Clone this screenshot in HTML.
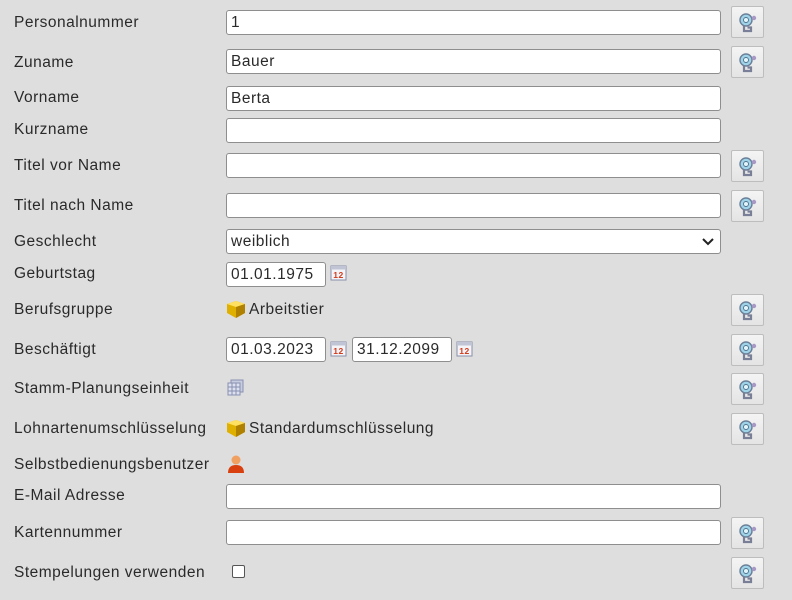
<!DOCTYPE html>
<html><head><meta charset="utf-8"><style>
body{margin:0;width:792px;height:600px;background:#dedede;font-family:"Liberation Sans",sans-serif;font-size:15.5px;color:#2a2a2a;position:relative;overflow:hidden;letter-spacing:0.5px}
.l{position:absolute;left:14px;line-height:20px}
.i{position:absolute;height:23px;border:1px solid #8e8e8e;border-radius:3px;background:#fff;box-sizing:content-box;line-height:23px;padding-left:4px;font-size:15.5px}
.b{position:absolute;left:731px;width:31px;height:30px;border:1px solid #bdbdbd;background:linear-gradient(#f4f4f4,#e4e4e4);border-radius:2px}
.b svg{position:absolute;left:6px;top:5px}
.cal{position:absolute;width:17px;height:17px}
.t{position:absolute;line-height:20px}
</style></head><body>
<svg width="0" height="0" style="position:absolute"><defs>
<g id="k"><circle cx="8" cy="8" r="6" fill="#9fd4e8" stroke="#6a7f98" stroke-width="1.4"/><circle cx="8" cy="8" r="2.5" fill="#e0f4fa" stroke="#50708a" stroke-width="0.9"/><path d="M6 13.5 L6 19 L13 19 L13 15.5 L9.5 15.5" fill="none" stroke="#7a7f98" stroke-width="2.2"/><circle cx="16" cy="6" r="2.2" fill="#a898c4"/></g>
<g id="c"><rect x="1" y="2" width="15" height="14" fill="#f4f4f8" stroke="#8890a8"/><rect x="1" y="2" width="15" height="3.5" fill="#c0c4d4"/><text x="8.5" y="14" font-size="8.5" font-weight="bold" fill="#d23a1a" text-anchor="middle" font-family="Liberation Sans">12</text></g>
<g id="cube"><path d="M1 5 L10 2 L19 5 L19 14 L10 19 L1 14Z" fill="#e0b000"/><path d="M1 5 L10 8 L19 5 L10 2Z" fill="#ffe060"/><path d="M10 8 L19 5 L19 14 L10 19Z" fill="#b08000"/></g>
</defs></svg>

<div class="l" style="top:13px">Personalnummer</div><div class="i" style="left:226px;top:10px;width:489px">1</div><div class="b" style="top:6px"><svg width="20" height="21"><use href="#k"/></svg></div>
<div class="l" style="top:53px">Zuname</div><div class="i" style="left:226px;top:49px;width:489px">Bauer</div><div class="b" style="top:46px"><svg width="20" height="21"><use href="#k"/></svg></div>
<div class="l" style="top:88px">Vorname</div><div class="i" style="left:226px;top:86px;width:489px">Berta</div>
<div class="l" style="top:120px">Kurzname</div><div class="i" style="left:226px;top:118px;width:489px"></div>
<div class="l" style="top:156px">Titel vor Name</div><div class="i" style="left:226px;top:153px;width:489px"></div><div class="b" style="top:150px"><svg width="20" height="21"><use href="#k"/></svg></div>
<div class="l" style="top:196px">Titel nach Name</div><div class="i" style="left:226px;top:193px;width:489px"></div><div class="b" style="top:190px"><svg width="20" height="21"><use href="#k"/></svg></div>
<div class="l" style="top:232px">Geschlecht</div><div class="i" style="left:226px;top:229px;width:489px">weiblich<svg style="position:absolute;right:6px;top:8px" width="12" height="8"><path d="M1 1 L6 6 L11 1" fill="none" stroke="#222" stroke-width="2"/></svg></div>
<div class="l" style="top:264px">Geburtstag</div><div class="i" style="left:226px;top:262px;width:94px">01.01.1975</div><svg class="cal" style="left:330px;top:264px"><use href="#c"/></svg>
<div class="l" style="top:300px">Berufsgruppe</div><svg style="position:absolute;left:226px;top:299px" width="20" height="21"><use href="#cube"/></svg><div class="t" style="left:249px;top:300px">Arbeitstier</div><div class="b" style="top:294px"><svg width="20" height="21"><use href="#k"/></svg></div>
<div class="l" style="top:340px">Beschäftigt</div><div class="i" style="left:226px;top:337px;width:94px">01.03.2023</div><svg class="cal" style="left:330px;top:340px"><use href="#c"/></svg><div class="i" style="left:352px;top:337px;width:94px">31.12.2099</div><svg class="cal" style="left:456px;top:340px"><use href="#c"/></svg><div class="b" style="top:334px"><svg width="20" height="21"><use href="#k"/></svg></div>
<div class="l" style="top:379px">Stamm-Planungseinheit</div><svg style="position:absolute;left:227px;top:379px" width="18" height="18"><rect x="4" y="1" width="12" height="12" fill="#c8cce0" stroke="#8890b0"/><rect x="1" y="4" width="12" height="12" fill="#dde0ee" stroke="#8890b0"/><path d="M5 4V16M9 4V16M1 8H13M1 12H13" stroke="#8890b0"/></svg><div class="b" style="top:373px"><svg width="20" height="21"><use href="#k"/></svg></div>
<div class="l" style="top:419px">Lohnartenumschlüsselung</div><svg style="position:absolute;left:226px;top:418px" width="20" height="21"><use href="#cube"/></svg><div class="t" style="left:249px;top:419px">Standardumschlüsselung</div><div class="b" style="top:413px"><svg width="20" height="21"><use href="#k"/></svg></div>
<div class="l" style="top:455px">Selbstbedienungsbenutzer</div><svg style="position:absolute;left:226px;top:454px" width="20" height="21"><circle cx="10" cy="6" r="4.5" fill="#f0a060"/><path d="M2 19 Q2 11 10 11 Q18 11 18 19Z" fill="#d84010"/></svg>
<div class="l" style="top:486px">E-Mail Adresse</div><div class="i" style="left:226px;top:484px;width:489px"></div>
<div class="l" style="top:523px">Kartennummer</div><div class="i" style="left:226px;top:520px;width:489px"></div><div class="b" style="top:517px"><svg width="20" height="21"><use href="#k"/></svg></div>
<div class="l" style="top:563px">Stempelungen verwenden</div><div style="position:absolute;left:232px;top:565px;width:11px;height:11px;border:1px solid #555;border-radius:2px;background:#fff"></div><div class="b" style="top:557px"><svg width="20" height="21"><use href="#k"/></svg></div>
</body></html>
